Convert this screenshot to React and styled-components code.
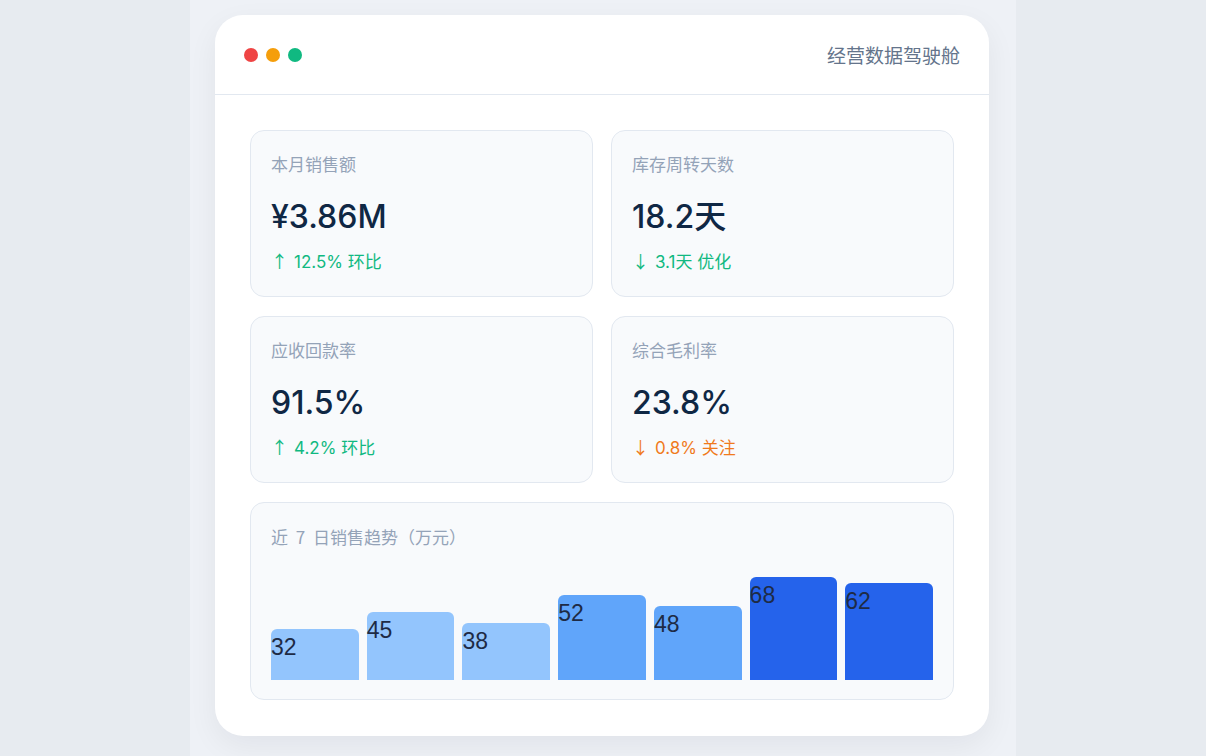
import React from "react";
import styled, { createGlobalStyle } from "styled-components";

const GlobalStyle = createGlobalStyle`
  body {
    margin: 0;
    background: #e7ebf0;
    font-family: "Inter", "Noto Sans CJK SC", sans-serif;
  }
`;

const Page = styled.div`
  max-width: 826px;
  min-height: 100vh;
  margin: 0 auto;
  padding: 15px 25px 20px;
  box-sizing: border-box;
  background: #eef1f6;
`;

const Window = styled.div`
  width: 774px;
  background: #ffffff;
  border-radius: 28px;
  box-shadow: 0 10px 30px rgba(15, 23, 42, 0.06);
  overflow: hidden;
`;

const Header = styled.div`
  height: 80px;
  box-sizing: border-box;
  padding: 0 29px;
  display: flex;
  align-items: center;
  justify-content: space-between;
  border-bottom: 1px solid #e2e8f0;
`;

const Dots = styled.div`
  display: flex;
  gap: 8px;
`;

const Dot = styled.span`
  width: 14px;
  height: 14px;
  border-radius: 50%;
  background: ${(p) => p.color};
`;

const Title = styled.div`
  font-size: 19px;
  color: #64748b;
  font-family: "Noto Sans CJK SC", sans-serif;
`;

const Body = styled.div`
  padding: 35px 35px 36px;
  display: grid;
  grid-template-columns: 1fr 1fr;
  column-gap: 18px;
  row-gap: 19px;
`;

const Card = styled.div`
  box-sizing: border-box;
  background: #f8fafc;
  border: 1px solid #e2e8f0;
  border-radius: 14px;
  padding: 21px 20px 0;
  display: flex;
  flex-direction: column;
`;

const StatCard = styled(Card)`
  height: 167px;
`;

const Label = styled.div`
  font-size: 17px;
  line-height: 24px;
  color: #94a3b8;
  font-family: "Noto Sans CJK SC", sans-serif;
`;

const ChartTitle = styled(Label)`
  word-spacing: 4px;
`;

const Value = styled.div`
  margin-top: 21px;
  font-size: 32px;
  line-height: 40px;
  font-weight: 500;
  color: #0f2744;
  font-family: "Inter", "Noto Sans CJK SC", sans-serif;
`;

const Delta = styled.div`
  margin-top: 12px;
  font-size: 17px;
  line-height: 24px;
  color: ${(p) => (p.warn ? "#f07a1c" : "#10b981")};
  font-family: "Inter", "Noto Sans CJK SC", sans-serif;
`;

const Arrow = styled.span`
  font-family: "Noto Sans CJK SC", sans-serif;
  margin-right: 6px;
`;

const ChartCard = styled(Card)`
  grid-column: span 2;
  height: 198px;
  padding: 22px 20px 0;
`;

const Bars = styled.div`
  height: 131px;
  display: flex;
  align-items: flex-end;
  gap: 8px;
`;

const Bar = styled.div`
  flex: 1;
  border-radius: 6px 6px 0 0;
  background: ${(p) => p.color};
  color: #1e2b45;
  font-size: 23px;
  line-height: 36px;
  font-family: "Liberation Sans", sans-serif;
`;

const stats = [
  { label: "本月销售额", value: "¥3.86M", arrow: "↑", delta: "12.5% 环比" },
  { label: "库存周转天数", value: "18.2天", arrow: "↓", delta: "3.1天 优化" },
  { label: "应收回款率", value: "91.5%", arrow: "↑", delta: "4.2% 环比" },
  { label: "综合毛利率", value: "23.8%", arrow: "↓", delta: "0.8% 关注", warn: true },
];

const sales = [
  { v: 32, h: 51 },
  { v: 45, h: 68 },
  { v: 38, h: 57 },
  { v: 52, h: 85 },
  { v: 48, h: 74 },
  { v: 68, h: 103 },
  { v: 62, h: 97 },
];

const barColor = (v) => (v >= 60 ? "#2563eb" : v >= 48 ? "#60a5fa" : "#93c5fd");

export default function App() {
  return (
    <>
      <GlobalStyle />
      <Page>
        <Window>
          <Header>
            <Dots>
              <Dot color="#ef4444" />
              <Dot color="#f59e0b" />
              <Dot color="#10b981" />
            </Dots>
            <Title>经营数据驾驶舱</Title>
          </Header>
          <Body>
            {stats.map((s) => (
              <StatCard key={s.label}>
                <Label>{s.label}</Label>
                <Value>{s.value}</Value>
                <Delta warn={s.warn}>
                  <Arrow>{s.arrow}</Arrow>
                  {s.delta}
                </Delta>
              </StatCard>
            ))}
            <ChartCard>
              <ChartTitle>近 7 日销售趋势（万元）</ChartTitle>
              <Bars>
                {sales.map((d, i) => (
                  <Bar key={i} color={barColor(d.v)} style={{ height: d.h }}>
                    {d.v}
                  </Bar>
                ))}
              </Bars>
            </ChartCard>
          </Body>
        </Window>
      </Page>
    </>
  );
}
